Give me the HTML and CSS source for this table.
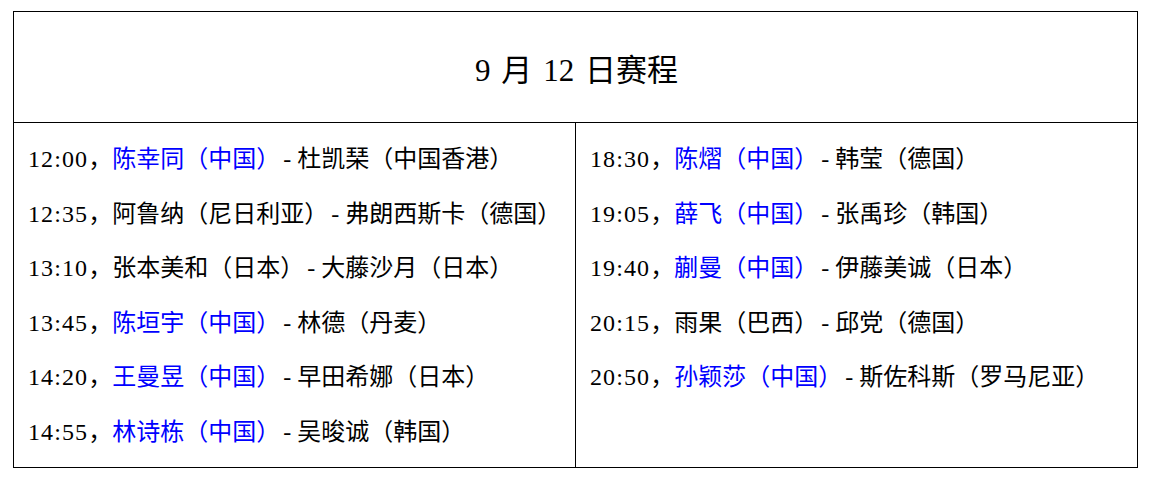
FILE: index.html
```html
<!DOCTYPE html>
<html lang="zh-CN">
<head>
<meta charset="utf-8">
<link rel="stylesheet" href="styles.css">
</head>
<body>
<div class="sheet">
  <div class="title">9 月 12 日赛程</div>
  <div class="cols">
    <div class="col">
      <p class="row"><span class="t">12:00</span>，<span class="cn">陈幸同（中国）</span><span class="d">-</span>杜凯琹（中国香港）</p>
      <p class="row"><span class="t">12:35</span>，阿鲁纳（尼日利亚）<span class="d">-</span>弗朗西斯卡（德国）</p>
      <p class="row"><span class="t">13:10</span>，张本美和（日本）<span class="d">-</span>大藤沙月（日本）</p>
      <p class="row"><span class="t">13:45</span>，<span class="cn">陈垣宇（中国）</span><span class="d">-</span>林德（丹麦）</p>
      <p class="row"><span class="t">14:20</span>，<span class="cn">王曼昱（中国）</span><span class="d">-</span>早田希娜（日本）</p>
      <p class="row"><span class="t">14:55</span>，<span class="cn">林诗栋（中国）</span><span class="d">-</span>吴晙诚（韩国）</p>
    </div>
    <div class="col right">
      <p class="row"><span class="t">18:30</span>，<span class="cn">陈熠（中国）</span><span class="d">-</span>韩莹（德国）</p>
      <p class="row"><span class="t">19:05</span>，<span class="cn">薛飞（中国）</span><span class="d">-</span>张禹珍（韩国）</p>
      <p class="row"><span class="t">19:40</span>，<span class="cn">蒯曼（中国）</span><span class="d">-</span>伊藤美诚（日本）</p>
      <p class="row"><span class="t">20:15</span>，雨果（巴西）<span class="d">-</span>邱党（德国）</p>
      <p class="row"><span class="t">20:50</span>，<span class="cn">孙颖莎（中国）</span><span class="d">-</span>斯佐科斯（罗马尼亚）</p>
    </div>
  </div>
</div>
</body>
</html>
```
FILE: styles.css
```css
html, body {
  margin: 0;
  padding: 0;
  background: #ffffff;
}
body {
  font-family: "Liberation Serif", "Noto Sans CJK SC", serif;
  color: #000000;
}
.sheet {
  box-sizing: border-box;
  width: 1125px;
  margin: 11px 0 0 13px;
  border: 1px solid #000;
}
.title {
  height: 110px;
  border-bottom: 1px solid #000;
  display: flex;
  align-items: center;
  justify-content: center;
  font-size: 31px;
  word-spacing: 0.1em;
  padding-left: 2px;
}
.cols {
  display: grid;
  grid-template-columns: 561px 1fr;
  height: 344px;
}
.col {
  padding: 9px 0 0 14px;
}
.right {
  border-left: 1px solid #000;
}
.row {
  margin: 0;
  height: 54.6px;
  line-height: 54.6px;
  font-size: 24px;
  white-space: nowrap;
}
.t {
  letter-spacing: 1.1px;
}
.d {
  padding: 0 6px 0 3px;
}
.cn {
  color: #0000ff;
}
```
